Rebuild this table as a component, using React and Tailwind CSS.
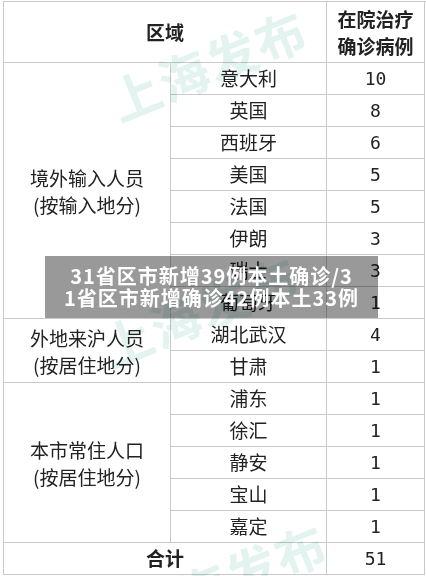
import React from "react";

const groups = [
  {
    name: ["境外输入人员", "(按输入地分)"],
    rows: [
      ["意大利", 10],
      ["英国", 8],
      ["西班牙", 6],
      ["美国", 5],
      ["法国", 5],
      ["伊朗", 3],
      ["瑞士", 3],
      ["葡萄牙", 1],
    ],
    span: "row-span-8",
  },
  {
    name: ["外地来沪人员", "(按居住地分)"],
    rows: [
      ["湖北武汉", 4],
      ["甘肃", 1],
    ],
    span: "row-span-2",
  },
  {
    name: ["本市常住人口", "(按居住地分)"],
    rows: [
      ["浦东", 1],
      ["徐汇", 1],
      ["静安", 1],
      ["宝山", 1],
      ["嘉定", 1],
    ],
    span: "row-span-5",
  },
];

const cell = "border-r border-b border-[#c9c9c9] flex items-center justify-center";
const num = "font-['DejaVu_Sans_Mono',monospace] text-[18px]";

function Watermark({ top, left }) {
  return (
    <span
      className="absolute pointer-events-none select-none text-[50px] font-bold text-[#e2f3f0] mix-blend-multiply -rotate-[22deg] tracking-[2px] whitespace-nowrap"
      style={{ top, left }}
    >
      上海发布
    </span>
  );
}

export default function App() {
  return (
    <div className="relative w-[426px] h-[576px] bg-white overflow-hidden pl-[3px] pt-[1px] font-['Noto_Sans_CJK_SC',sans-serif] text-[#222] text-[19px]">
      <div className="grid grid-cols-[167px_156px_98px] grid-rows-[61px_repeat(16,32px)] border-l border-t border-[#c9c9c9]">
        {/* header */}
        <div className={`${cell} col-span-2 font-bold`}>区域</div>
        <div className={`${cell} flex-col font-bold leading-[27px]`}>
          <span>在院治疗</span>
          <span>确诊病例</span>
        </div>

        {groups.map((g) => (
          <React.Fragment key={g.name[0]}>
            <div className={`${cell} ${g.span} flex-col leading-[27px]`}>
              <span>{g.name[0]}</span>
              <span>{g.name[1]}</span>
            </div>
            {g.rows.map(([place, n]) => (
              <React.Fragment key={place}>
                <div className={cell}>{place}</div>
                <div className={`${cell} ${num}`}>{n}</div>
              </React.Fragment>
            ))}
          </React.Fragment>
        ))}

        {/* total */}
        <div className={`${cell} col-span-2 font-bold`}>合计</div>
        <div className={`${cell} ${num}`}>51</div>
      </div>

      <Watermark top={26} left={104} />
      <Watermark top={272} left={96} />
      <Watermark top={540} left={124} />

      {/* headline banner */}
      <div className="absolute left-[45px] top-[256px] w-[333px] h-[62px] bg-black/40 flex flex-col items-center justify-center text-white font-bold text-[20px] leading-[22px] tracking-[1px] font-['Noto_Sans_CJK_SC',sans-serif]">
        <span>31省区市新增39例本土确诊/3</span>
        <span>1省区市新增确诊42例本土33例</span>
      </div>
    </div>
  );
}
